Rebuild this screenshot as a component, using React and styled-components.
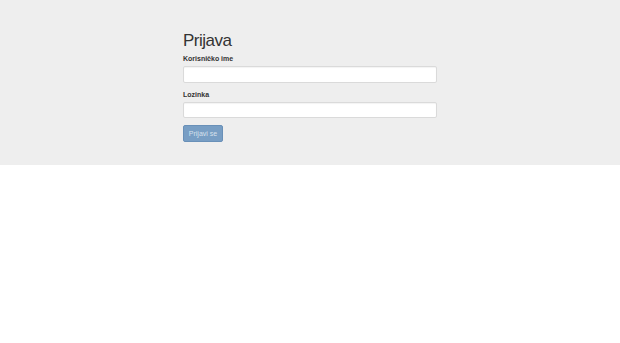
import React from "react";
import styled, { createGlobalStyle } from "styled-components";

const GlobalStyle = createGlobalStyle`
    body {
        margin: 0;
        background: #fff;
        font-family: "Liberation Sans", Arial, sans-serif;
        color: #333;
    }
`;

const Jumbotron = styled.section`
    background: #eeeeee;
    height: 165px;
    box-sizing: border-box;
    padding-top: 31px;
`;

const Container = styled.div`
    width: 254px;
    margin: 0 auto;
`;

const Title = styled.h1`
    margin: 0 0 3px;
    font-size: 17px;
    font-weight: 400;
    line-height: 20px;
    letter-spacing: -0.5px;
    color: #333;
`;

const Group = styled.div`
    margin-bottom: 7px;
`;

const Label = styled.label`
    display: block;
    font-size: 7px;
    font-weight: 700;
    line-height: 10px;
    margin-bottom: 2px;
    color: #333;
`;

const Input = styled.input`
    display: block;
    width: 100%;
    height: 16.5px;
    box-sizing: border-box;
    border: 1px solid #dadada;
    border-radius: 2px;
    background: #fff;
    box-shadow: inset 0 1px 1px rgba(0, 0, 0, 0.05);
    font-family: inherit;
    font-size: 7px;
    padding: 0 6px;
    outline: none;
`;

const Button = styled.button`
    display: block;
    height: 16.5px;
    width: 40px;
    padding: 0;
    border: 1px solid #6990b8;
    border-radius: 2px;
    background: #789ec4;
    color: #d6e1ec;
    font-family: inherit;
    font-size: 7px;
    cursor: not-allowed;
`;

export default function App() {
    return (
        <>
            <GlobalStyle />
            <Jumbotron>
                <Container>
                    <Title>Prijava</Title>
                    <Group>
                        <Label>Korisničko ime</Label>
                        <Input type="text" />
                    </Group>
                    <Group>
                        <Label>Lozinka</Label>
                        <Input type="password" />
                    </Group>
                    <Button disabled>Prijavi se</Button>
                </Container>
            </Jumbotron>
        </>
    );
}
